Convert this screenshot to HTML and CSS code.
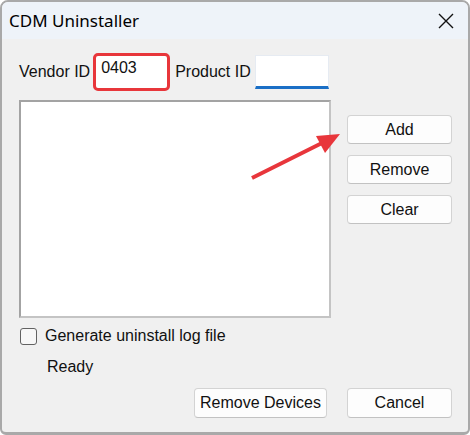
FILE: index.html
```html
<!DOCTYPE html>
<html lang="en">
<head>
    <meta charset="UTF-8">
    <title>CDM Uninstaller</title>
    <link rel="stylesheet" href="styles.css">
</head>
<body>
    <div class="window">
        <div class="titlebar">
            <span class="title">CDM Uninstaller</span>
            <svg class="close" width="16" height="16" viewBox="0 0 16 16">
                <path d="M1 1 L15 15 M15 1 L1 15" stroke="#111" stroke-width="1.4" fill="none"/>
            </svg>
        </div>

        <div class="content">
            <!-- ID fields -->
            <div class="id-row">
                <label class="lbl">Vendor ID</label>
                <div class="field vendor">0403</div>
                <label class="lbl product-lbl">Product ID</label>
                <div class="field product"></div>
            </div>

            <div class="main">
                <div class="listbox"></div>
                <div class="side-buttons">
                    <button class="btn">Add</button>
                    <button class="btn">Remove</button>
                    <button class="btn">Clear</button>
                </div>
            </div>

            <div class="check-row">
                <span class="checkbox"></span>
                <span class="lbl">Generate uninstall log file</span>
            </div>

            <div class="status">Ready</div>

            <div class="footer">
                <button class="btn wide">Remove Devices</button>
                <button class="btn">Cancel</button>
            </div>
        </div>

        <!-- annotation arrow -->
        <svg class="arrow" width="470" height="435" viewBox="0 0 470 435">
            <line x1="252" y1="178" x2="324" y2="142" stroke="#e8363b" stroke-width="4"/>
            <polygon points="340,134 316,136 325,153" fill="#e8363b"/>
        </svg>
    </div>
</body>
</html>
```

FILE: styles.css
```css
body {
    margin: 0;
    background: #ffffff;
    font-family: 'Liberation Sans', Arial, sans-serif;
    font-size: 16px;
    color: #111;
}

.window {
    position: relative;
    width: 470px;
    height: 435px;
    box-sizing: border-box;
    border: 2px solid #a9a9a9;
    border-bottom-width: 3px;
    border-radius: 8px 8px 6px 6px;
    background: #f0f0f0;
    overflow: hidden;
}

.titlebar {
    height: 37px;
    background: #eef3f9;
    display: flex;
    align-items: center;
    justify-content: space-between;
    padding: 0 14px 0 7px;
}

.title {
    font-family: 'Noto Sans', 'Open Sans', sans-serif;
    font-size: 17px;
    color: #000;
}

.close {
    display: block;
    margin-top: 1px;
}

.content {
    padding: 14px 16px 0 17px;
}

.id-row {
    display: flex;
    align-items: center;
    height: 38px;
}

.lbl {
    white-space: nowrap;
}

.field {
    box-sizing: border-box;
    background: #fff;
    height: 34px;
    padding: 5px 0 0 5px;
}

.vendor {
    width: 77px;
    height: 38px;
    border: 3px solid #e8363b;
    border-radius: 5px;
    margin-left: 3px;
    padding: 3px 0 0 5px;
}

.product-lbl {
    margin-left: 5px;
}

.product {
    width: 74px;
    margin-left: 4px;
    border: 1px solid #e6ebf2;
    border-bottom: 3px solid #1a6fc6;
}

.main {
    display: flex;
    gap: 16px;
    margin-top: 9px;
}

.listbox {
    width: 312px;
    height: 218px;
    box-sizing: border-box;
    background: #fff;
    border: 2px solid #a3a3a3;
    border-right-color: #c4c4c4;
    border-bottom-color: #c4c4c4;
}

.side-buttons {
    display: flex;
    flex-direction: column;
    gap: 11px;
    padding-top: 15px;
}

.btn {
    width: 105px;
    height: 29px;
    box-sizing: border-box;
    background: #fdfdfd;
    border: 1px solid #d3d3d3;
    border-bottom-color: #c2c2c2;
    border-radius: 4px;
    font-family: 'Liberation Sans', Arial, sans-serif;
    font-size: 16px;
    color: #111;
    padding: 0;
}

.check-row {
    display: flex;
    align-items: center;
    gap: 8px;
    margin-top: 7px;
    margin-left: 1px;
    height: 22px;
}

.checkbox {
    width: 17px;
    height: 17px;
    box-sizing: border-box;
    border: 1px solid #626262;
    border-radius: 3px;
    background: #f7f7f7;
}

.status {
    margin: 11px 0 0 28px;
    height: 20px;
}

.footer {
    display: flex;
    justify-content: flex-end;
    gap: 20px;
    margin-top: 10px;
}

.footer .btn {
    height: 30px;
}

.footer .btn.wide {
    width: 133px;
}

.arrow {
    position: absolute;
    top: -2px;
    left: -2px;
    pointer-events: none;
}
```
